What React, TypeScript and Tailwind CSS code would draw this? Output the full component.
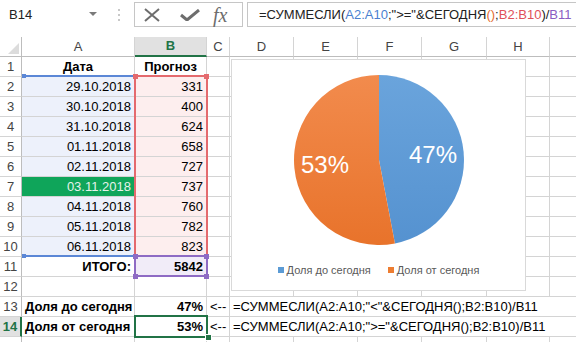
import React from "react";

const W = ["w-[113px]", "w-[72px]", "w-[23px]", "w-[64px]", "w-[64px]", "w-[64px]", "w-[65px]", "w-[63px]", "w-[64px]"];

type C = { t?: string; cls?: string };

function Cell({ w, c }: { w: string; c?: C }) {
  return (
    <div
      className={`${w} shrink-0 h-full border-r border-b border-[#d4d4d4] px-[3px] flex items-center whitespace-nowrap overflow-visible ${c?.cls ?? ""}`}
    >
      {c?.t}
    </div>
  );
}

const dates = ["29.10.2018", "30.10.2018", "31.10.2018", "01.11.2018", "02.11.2018", "03.11.2018", "04.11.2018", "05.11.2018", "06.11.2018"];
const vals = ["331", "400", "624", "658", "727", "737", "760", "782", "823"];

function RowHdr({ n, sel }: { n?: number; sel?: boolean }) {
  return (
    <div
      className={`w-[22px] shrink-0 h-full border-b border-[#d4d4d4] flex items-center justify-center text-[13px] ${
        sel ? "bg-[#e1e1e1] text-[#217346] font-bold border-r-2 border-r-[#217346]" : "text-[#444] border-r border-r-[#bdbdbd]"
      }`}
    >
      {n}
    </div>
  );
}

function Row({ n, cells, sel }: { n?: number; cells: (C | undefined)[]; sel?: boolean }) {
  return (
    <div className="flex h-[20px]">
      <RowHdr n={n} sel={sel} />
      {W.map((w, i) => (
        <Cell key={i} w={w} c={cells[i]} />
      ))}
    </div>
  );
}

function FormulaRow({ n, a, b, f, sel }: { n: number; a: string; b: string; f: string; sel?: boolean }) {
  return (
    <div className="flex h-[20px]">
      <RowHdr n={n} sel={sel} />
      <Cell w={W[0]} c={{ t: a, cls: "font-bold" }} />
      <Cell w={W[1]} c={{ t: b, cls: "font-bold justify-end" }} />
      <Cell w={W[2]} c={{ t: "<--", cls: "px-[2px]" }} />
      <div className="flex-1 h-full border-b border-[#d4d4d4] px-[3px] flex items-center whitespace-nowrap">{f}</div>
    </div>
  );
}

export default function App() {
  const f1 = '=СУММЕСЛИ(A2:A10;"<"&СЕГОДНЯ();B2:B10)/B11';
  const f2 = '=СУММЕСЛИ(A2:A10;">="&СЕГОДНЯ();B2:B10)/B11';
  const cx = 147, cy = 100, r = 85;
  const ang = (0.47 * 360 * Math.PI) / 180;
  const ex = cx + r * Math.sin(ang);
  const ey = cy - r * Math.cos(ang);
  return (
    <div className="w-[576px] h-[342px] overflow-hidden bg-white font-['Liberation_Sans',Arial,sans-serif] text-[13px] text-black">
      {/* formula bar */}
      <div className="h-[37px] flex items-start pt-[2px]">
        <div className="w-[103px] h-[25px] flex items-center pl-[9px] pr-[6px] text-[13px] text-[#222]">
          <span className="flex-1">B14</span>
          <svg width="8" height="5" viewBox="0 0 8 5"><path d="M0 0 L8 0 L4 4 Z" fill="#7a7a7a" /></svg>
        </div>
        <div className="w-[31px] h-[25px] flex flex-col items-center justify-center gap-[3px]">
          <div className="w-[2px] h-[2px] bg-[#c8c8c8]" />
          <div className="w-[2px] h-[2px] bg-[#c8c8c8]" />
          <div className="w-[2px] h-[2px] bg-[#c8c8c8]" />
        </div>
        <div className="w-[109px] h-[25px] border border-[#c6c6c6] flex items-center">
          <svg width="16" height="14" viewBox="0 0 16 14" className="ml-[9px]">
            <path d="M1 1 L15 13 M15 1 L1 13" stroke="#6d6d6d" strokeWidth="2" />
          </svg>
          <svg width="20" height="12" viewBox="0 0 20 12" className="ml-[20px]">
            <path d="M1 6 L7 11 L19 1" stroke="#6d6d6d" strokeWidth="3" fill="none" />
          </svg>
          <span className="ml-[13px] font-['Liberation_Serif',serif] italic text-[20px] text-[#6d6d6d] leading-none">fx</span>
        </div>
        <div className="flex-1 ml-[4px] h-[25px] border border-[#c6c6c6] border-r-0 flex items-center pl-[11px] whitespace-nowrap text-[13px] text-[#222]">
          <span>=СУММЕСЛИ(</span>
          <span className="text-[#4a7fd0]">A2:A10</span>
          <span>;"&gt;="&amp;СЕГОДНЯ</span>
          <span className="text-[#e46c2e]">()</span>
          <span>;</span>
          <span className="text-[#e0505a]">B2:B10</span>
          <span>)/</span>
          <span className="text-[#8a5cc2]">B11</span>
        </div>
      </div>

      {/* sheet */}
      <div className="relative">
        {/* column headers */}
        <div className="flex h-[20px] text-[#444]">
          <div className="w-[22px] shrink-0 h-full border-r border-b border-[#bdbdbd] relative">
            <svg width="22" height="20" viewBox="0 0 22 20" className="absolute left-0 top-0">
              <path d="M8 17 L19 17 L19 6 Z" fill="#dcdcdc" />
            </svg>
          </div>
          {["A", "B", "C", "D", "E", "F", "G", "H", ""].map((l, i) => (
            <div
              key={i}
              className={`${W[i]} shrink-0 h-full border-r border-r-[#d4d4d4] flex items-center justify-center ${
                l === "B" ? "bg-[#e1e1e1] border-b-2 border-b-[#217346] text-[#217346] font-bold" : "border-b border-b-[#bdbdbd]"
              }`}
            >
              {l}
            </div>
          ))}
        </div>
        <Row n={1} cells={[{ t: "Дата", cls: "font-bold justify-center" }, { t: "Прогноз", cls: "font-bold justify-center" }]} />
        {dates.map((d, i) => (
          <Row
            key={d}
            n={i + 2}
            cells={[
              { t: d, cls: i === 5 ? "justify-end bg-[#0fa55a] text-[#e6f2ea]" : "justify-end bg-[#edf1fb]" },
              { t: vals[i], cls: "justify-end bg-[#fdeeee]" },
            ]}
          />
        ))}
        <Row n={11} cells={[{ t: "ИТОГО:", cls: "font-bold justify-end" }, { t: "5842", cls: "font-bold justify-end bg-[#f1ecf8]" }]} />
        <Row n={12} cells={[]} />
        <FormulaRow n={13} a="Доля до сегодня" b="47%" f={f1} />
        <FormulaRow n={14} a="Доля от сегодня" b="53%" f={f2} sel />
        <Row cells={[]} />

        {/* range highlights */}
        <div className="absolute left-[23px] top-[38px] w-[111px] h-[2px] bg-[#5b87d6]" />
        <div className="absolute left-[22px] top-[37px] w-[4px] h-[4px] bg-[#5b87d6]" />
        <div className="absolute left-[23px] top-[218px] w-[111px] h-[2px] bg-[#5b87d6]" />
        <div className="absolute left-[22px] top-[217px] w-[4px] h-[4px] bg-[#5b87d6]" />
        <div className="absolute left-[134px] top-[38px] w-[74px] h-[182px] border-2 border-[#e46a6e]" />
        <div className="absolute left-[133px] top-[37px] w-[5px] h-[5px] bg-[#e46a6e]" />
        <div className="absolute left-[204px] top-[37px] w-[5px] h-[5px] bg-[#e46a6e]" />
        <div className="absolute left-[134px] top-[218px] w-[74px] h-[22px] border-2 border-[#8e6bc4]" />
        <div className="absolute left-[133px] top-[217px] w-[5px] h-[5px] bg-[#8e6bc4]" />
        <div className="absolute left-[204px] top-[217px] w-[5px] h-[5px] bg-[#8e6bc4]" />
        <div className="absolute left-[133px] top-[237px] w-[5px] h-[5px] bg-[#8e6bc4]" />
        <div className="absolute left-[204px] top-[237px] w-[5px] h-[5px] bg-[#8e6bc4]" />
        <div className="absolute left-[134px] top-[278px] w-[74px] h-[23px] border-2 border-[#217346]" />
        <div className="absolute left-[205px] top-[297px] w-[5px] h-[5px] bg-[#217346] border border-white box-content" />

        {/* chart */}
        <div className="absolute left-[231px] top-[22px] w-[295px] h-[232px] bg-white border border-[#d9d9d9] flex flex-col">
          <svg width="293" height="195" viewBox="0 0 293 195">
            <defs>
              <linearGradient id="gb" x1="0" y1="0" x2="0" y2="1">
                <stop offset="0" stopColor="#6aa4dc" />
                <stop offset="1" stopColor="#5592d0" />
              </linearGradient>
              <linearGradient id="go" x1="0" y1="0" x2="0" y2="1">
                <stop offset="0" stopColor="#f28b4d" />
                <stop offset="1" stopColor="#e8732b" />
              </linearGradient>
            </defs>
            <path d={`M${cx} ${cy} L${cx} ${cy - r} A${r} ${r} 0 0 1 ${ex} ${ey} Z`} fill="url(#gb)" />
            <path d={`M${cx} ${cy} L${ex} ${ey} A${r} ${r} 0 1 1 ${cx} ${cy - r} Z`} fill="url(#go)" />
            <text x="177" y="103" fill="#fff" fontSize="24" fontFamily="Liberation Sans, Arial, sans-serif">47%</text>
            <text x="69" y="113" fill="#fff" fontSize="24" fontFamily="Liberation Sans, Arial, sans-serif">53%</text>
          </svg>
          <div className="h-[30px] flex items-center justify-center gap-[17px] text-[11px] text-[#595959]">
            <div className="flex items-center gap-[3px]">
              <div className="w-[6px] h-[6px] bg-[#5b9bd5]" />
              <span>Доля до сегодня</span>
            </div>
            <div className="flex items-center gap-[3px]">
              <div className="w-[6px] h-[6px] bg-[#ed7d31]" />
              <span>Доля от сегодня</span>
            </div>
          </div>
        </div>
      </div>
    </div>
  );
}
